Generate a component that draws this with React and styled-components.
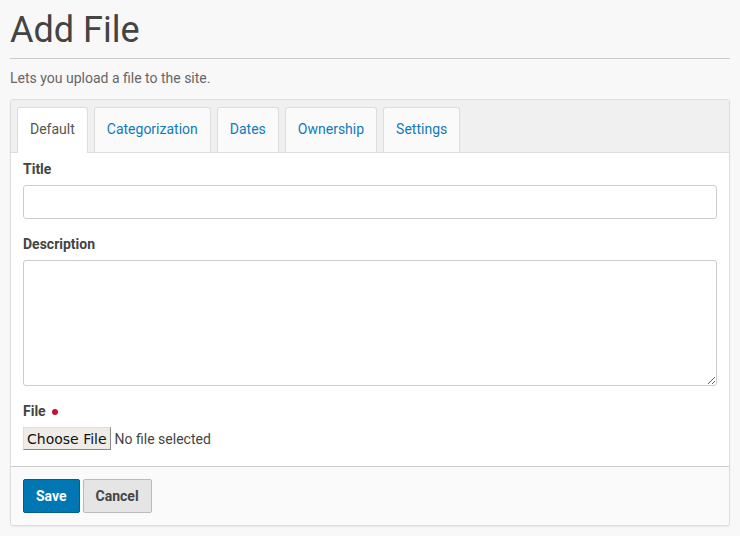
import React from 'react';
import styled, { createGlobalStyle } from 'styled-components';

const GlobalStyle = createGlobalStyle`
  html, body {
    margin: 0;
    padding: 0;
    background: #f8f8f8;
    font-family: Roboto, "Liberation Sans", Arial, sans-serif;
    color: #444;
  }
`;

const Page = styled.div`
  padding: 0 10px 10px;
`;

const Heading = styled.h1`
  margin: 10px 0 0;
  padding-bottom: 8px;
  font-size: 36px;
  line-height: 40px;
  font-weight: 400;
  color: #444;
  border-bottom: 1px solid #ccc;
`;

const Lead = styled.p`
  margin: 9px 0 11px;
  font-size: 14px;
  line-height: 20px;
  color: #666;
`;

const Panel = styled.div`
  background: #fff;
  border: 1px solid #ddd;
  border-radius: 3px;
  box-shadow: 0 1px 2px rgba(0, 0, 0, 0.06);
  overflow: hidden;
`;

const TabBar = styled.div`
  display: flex;
  gap: 6px;
  padding: 7px 6px 0;
  background: #f0f0f0;
  border-bottom: 1px solid #ddd;
`;

const Tab = styled.div`
  box-sizing: border-box;
  padding: 0 12px;
  display: flex;
  align-items: center;
  font-size: 14px;
  color: ${(p) => (p.$active ? '#555' : '#0f7bb8')};
  background: ${(p) => (p.$active ? '#fff' : '#fafafa')};
  border: 1px solid #ddd;
  border-bottom: none;
  border-radius: 3px 3px 0 0;
  margin-bottom: ${(p) => (p.$active ? '-1px' : '0')};
  height: ${(p) => (p.$active ? '46px' : '45px')};
  padding-bottom: ${(p) => (p.$active ? '4px' : '3px')};
`;

const Body = styled.div`
  padding: 6px 12px 16px;
`;

const Field = styled.div`
  margin-bottom: ${(p) => p.$gap || '15px'};
`;

const Label = styled.label`
  display: flex;
  align-items: center;
  gap: 6px;
  font-size: 14px;
  line-height: 20px;
  font-weight: 700;
  color: #444;
  margin-bottom: 6px;
`;

const Required = styled.span`
  width: 6px;
  height: 6px;
  border-radius: 50%;
  background: #c8102e;
  margin-top: 2px;
`;

const TextInput = styled.input`
  display: block;
  box-sizing: border-box;
  width: 100%;
  height: 34px;
  border: 1px solid #ccc;
  border-radius: 3px;
  background: #fff;
  padding: 6px 8px;
  font: inherit;
  font-size: 14px;
`;

const TextArea = styled.textarea`
  display: block;
  box-sizing: border-box;
  width: 100%;
  height: 126px;
  border: 1px solid #ccc;
  border-radius: 3px;
  background: #fff;
  padding: 6px 8px;
  font: inherit;
  font-size: 14px;
  resize: both;
`;

const FileRow = styled.div`
  display: flex;
  align-items: center;
  gap: 4px;
  font-size: 14px;
  color: #444;
`;

const ChooseButton = styled.button`
  box-sizing: border-box;
  height: 23px;
  padding: 0 3px;
  font-family: "DejaVu Sans", sans-serif;
  font-size: 14px;
  color: #111;
  background: #efebe7;
  border: 1px solid;
  border-color: #ddd #888 #888 #ddd;
  border-radius: 0;
`;

const Footer = styled.div`
  display: flex;
  gap: 3px;
  padding: 12px;
  background: #fafafa;
  border-top: 1px solid #ccc;
`;

const Button = styled.button`
  box-sizing: border-box;
  height: 34px;
  padding: 0 12px;
  font-family: Roboto, "Liberation Sans", sans-serif;
  font-size: 14px;
  font-weight: 700;
  border-radius: 2px;
  border: 1px solid ${(p) => (p.$primary ? '#005e8d' : '#bbb')};
  background: ${(p) => (p.$primary ? '#0077b3' : '#e5e5e5')};
  color: ${(p) => (p.$primary ? '#fff' : '#444')};
`;

const tabs = ['Default', 'Categorization', 'Dates', 'Ownership', 'Settings'];

export default function App() {
  return (
    <Page>
      <GlobalStyle />
      <Heading>Add File</Heading>
      <Lead>Lets you upload a file to the site.</Lead>
      <Panel>
        <TabBar>
          {tabs.map((t, i) => (
            <Tab key={t} $active={i === 0}>{t}</Tab>
          ))}
        </TabBar>
        <Body>
          <Field>
            <Label>Title</Label>
            <TextInput type="text" />
          </Field>
          <Field>
            <Label>Description</Label>
            <TextArea />
          </Field>
          <Field $gap="0">
            <Label>File <Required /></Label>
            <FileRow>
              <ChooseButton type="button">Choose File</ChooseButton>
              <span>No file selected</span>
            </FileRow>
          </Field>
        </Body>
        <Footer>
          <Button $primary>Save</Button>
          <Button>Cancel</Button>
        </Footer>
      </Panel>
    </Page>
  );
}
